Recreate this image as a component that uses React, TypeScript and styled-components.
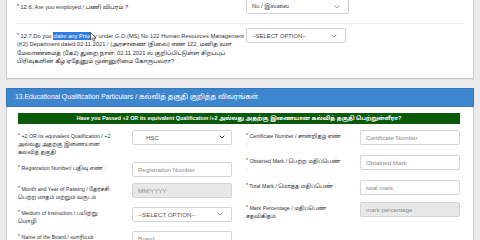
import React from 'react';
import styled, { createGlobalStyle } from 'styled-components';

const FONT = `"Liberation Sans", Arial, "Noto Sans Tamil", "Lohit Tamil", "Noto Sans", sans-serif`;

const GlobalStyle = createGlobalStyle`
  html, body {
    margin: 0;
    padding: 0;
    background: #ebebeb;
    font-family: ${FONT};
    color: #333;
  }
  #root {
    width: 480px;
    height: 240px;
    overflow: hidden;
  }
`;

type Field = {
  lines: string[];
  kind: 'input' | 'select';
  value: string;
  disabled?: boolean;
  wide?: boolean;
};

const leftFields: Field[] = [
  {
    lines: ['+2 OR its equivalent Qualification / +2', 'அல்லது அதற்கு இணையான', 'கல்வித் தகுதி'],
    kind: 'select',
    value: 'HSC',
    wide: true,
  },
  { lines: ['Registration Number/ பதிவு எண் :'], kind: 'input', value: 'Registration Number' },
  {
    lines: ['Month and Year of Passing / தேர்ச்சி', 'பெற்ற மாதம் மற்றும் வருடம்'],
    kind: 'input',
    value: 'MM/YYYY',
    disabled: true,
  },
  { lines: ['Medium of Instruction / பயிற்று', 'மொழி'], kind: 'select', value: '--SELECT OPTION--' },
  { lines: ['Name of the Board / வாரியம்'], kind: 'input', value: 'Board' },
];

const rightFields: Field[] = [
  { lines: ['Certificate Number / சான்றிதழ் எண்', ':'], kind: 'input', value: 'Certificate Number' },
  { lines: ['Obtained Mark / பெற்ற மதிப்பெண்', ':'], kind: 'input', value: 'Obtained Mark' },
  { lines: ['Total Mark / மொத்த மதிப்பெண் :'], kind: 'input', value: 'total mark' },
  {
    lines: ['Mark Percentage / மதிப்பெண்', 'சதவிகிதம்'],
    kind: 'input',
    value: 'mark percentage',
    disabled: true,
  },
];

const Chevron: React.FC<{ dark?: boolean }> = ({ dark }) => (
  <svg width="6" height="4" viewBox="0 0 6 4">
    <polyline
      points="0.6,0.6 3,3 5.4,0.6"
      fill="none"
      stroke={dark ? '#444' : '#888'}
      strokeWidth={dark ? 1 : 0.8}
    />
  </svg>
);

const Cursor = () => (
  <CursorMark width="7" height="10" viewBox="0 0 7 10">
    <path d="M0.5 0.5 L0.5 8 L2.3 6.3 L3.6 9.2 L4.8 8.7 L3.6 5.9 L6 5.9 Z" fill="#fff" stroke="#222" strokeWidth="0.6" />
  </CursorMark>
);

const FormField: React.FC<{ field: Field }> = ({ field }) => (
  <FieldRow>
    <FieldLabel>
      <Star>*</Star>{' '}
      {field.lines.map((line, i) => (
        <React.Fragment key={i}>
          {i > 0 && <br />}
          {line}
        </React.Fragment>
      ))}
    </FieldLabel>
    {field.kind === 'select' ? (
      <SelectBox $wide={field.wide}>
        <span>{field.value}</span>
        <Chevron dark={field.wide} />
      </SelectBox>
    ) : (
      <InputBox $disabled={field.disabled}>{field.value}</InputBox>
    )}
  </FieldRow>
);

const App: React.FC = () => (
  <>
    <GlobalStyle />
    <Page>
      <TopCard>
        <QuestionRow>
          <QuestionText>
            <Star>*</Star> 12.6. Are you employed / பணி விபரம் ?
          </QuestionText>
          <TopSelect>
            <span>No / இல்லை</span>
            <Chevron />
          </TopSelect>
        </QuestionRow>
        <Divider />
        <QuestionRow>
          <QuestionText>
            <Star>*</Star> 12.7.Do you <Selected>claim any Prior</Selected>
            <CursorSpot>
              <Cursor />
            </CursorSpot>
            ity under G.O.(MS) No 122 Human Resources Management
            <br />
            (K2) Department dated 02.11.2021 / (அரசாணை (நிலை) எண் 122, மனித வள
            <br />
            மேலாண்மைத் (கே2) துறை,நாள்: 02.11.2021 ல் குறிப்பிட்டுள்ள சிறப்புப்
            <br />
            பிரிவுகளின் கீழ் ஏதேனும் முன்னுரிமை கோருபவரா?
          </QuestionText>
          <TopSelect $narrow>
            <span>--SELECT OPTION--</span>
            <Chevron />
          </TopSelect>
        </QuestionRow>
      </TopCard>

      <Panel>
        <PanelHeader>13.Educational Qualification Particulars / கல்வித் தகுதி குறித்த விவரங்கள்</PanelHeader>
        <PanelBody>
          <Banner>
            Have you Passed +2 OR its equivalent Qualification /+2 அல்லது அதற்கு இணையான கல்வித் தகுதி
            பெற்றுள்ளீரா?
          </Banner>
          <FormGrid>
            <Column $gap={6}>
              {leftFields.map((f) => (
                <FormField key={f.value} field={f} />
              ))}
            </Column>
            <Column $gap={7}>
              {rightFields.map((f) => (
                <FormField key={f.value} field={f} />
              ))}
            </Column>
          </FormGrid>
        </PanelBody>
      </Panel>
    </Page>
  </>
);

const Page = styled.div`
  width: 480px;
  padding: 0 6px;
  box-sizing: border-box;
`;

const TopCard = styled.div`
  margin-top: -8px;
  background: #fff;
  border: 1px solid #c9c9c9;
  padding: 6px 0 12px 10px;
  box-shadow: 0 1px 1px rgba(0, 0, 0, 0.05);
`;

const QuestionRow = styled.div`
  display: grid;
  grid-template-columns: 229px auto;
  align-items: start;
`;

const QuestionText = styled.div`
  position: relative;
  font-size: 5.75px;
  line-height: 8.4px;
  color: #333;
  padding-top: 4px;
`;

const Star = styled.span`
  position: relative;
  top: -1px;
  font-size: 5px;
`;

const Selected = styled.span`
  background: #2f7de1;
  color: #fff;
  padding: 1px 0;
`;

const CursorSpot = styled.span`
  position: relative;
  display: inline-block;
  width: 0;
`;

const CursorMark = styled.svg`
  position: absolute;
  left: -1px;
  top: -6px;
`;

const TopSelect = styled.div<{ $narrow?: boolean }>`
  width: ${({ $narrow }) => ($narrow ? '100px' : '103px')};
  height: 15px;
  box-sizing: border-box;
  border: 1px solid #d2d2d2;
  border-radius: 2px;
  background: #fff;
  display: flex;
  align-items: center;
  justify-content: space-between;
  padding: 0 8px 0 5px;
  font-size: 5.8px;
  color: #444;
`;

const Divider = styled.div`
  height: 1px;
  background: #ececec;
  margin: 9px 10px 4px 0;
`;

const Panel = styled.div`
  margin-top: 9px;
  background: #fff;
  border: 1px solid #c9c9c9;
  border-top: none;
  height: 200px;
`;

const PanelHeader = styled.div`
  height: 19px;
  margin: 0 -1px;
  padding-left: 8px;
  background: #3d85cc;
  border: 1px solid #3677b8;
  box-sizing: border-box;
  display: flex;
  align-items: center;
  color: #fff;
  font-size: 6.8px;
  white-space: nowrap;
  overflow: hidden;
`;

const PanelBody = styled.div`
  padding: 6px 13px 0 11px;
`;

const Banner = styled.div`
  height: 11px;
  background: #0a5a0a;
  color: #fff;
  font-weight: bold;
  font-size: 5.4px;
  display: flex;
  align-items: center;
  justify-content: center;
  white-space: nowrap;
`;

const FormGrid = styled.div`
  display: grid;
  grid-template-columns: 214px 214px;
  column-gap: 14px;
  margin-top: 6px;
`;

const Column = styled.div<{ $gap: number }>`
  display: flex;
  flex-direction: column;
  gap: ${({ $gap }) => $gap}px;
`;

const FieldRow = styled.div`
  display: grid;
  grid-template-columns: 114px 1fr;
  align-items: start;
`;

const FieldLabel = styled.div`
  font-size: 5.3px;
  line-height: 8px;
  padding-top: 2px;
  color: #333;
`;

const InputBox = styled.div<{ $disabled?: boolean }>`
  height: 15px;
  box-sizing: border-box;
  border: 1px solid #d4d4d4;
  border-radius: 2px;
  background: ${({ $disabled }) => ($disabled ? '#e8e8e8' : '#fff')};
  padding: 0 5px;
  display: flex;
  align-items: center;
  font-size: 6.2px;
  color: #8a8a8a;
`;

const SelectBox = styled.div<{ $wide?: boolean }>`
  height: 15px;
  box-sizing: border-box;
  border: 1px solid #d4d4d4;
  border-radius: 2px;
  background: #fff;
  padding: ${({ $wide }) => ($wide ? '0 6px 0 13px' : '0 8px 0 5px')};
  display: flex;
  align-items: center;
  justify-content: space-between;
  font-size: 6.2px;
  color: #555;
`;

export default App;
